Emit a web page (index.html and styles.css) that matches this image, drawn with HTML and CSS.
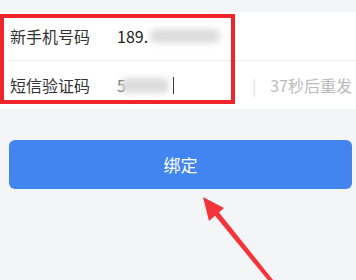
FILE: index.html
```html
<!DOCTYPE html>
<html lang="zh-CN">
  <head>
    <meta charset="UTF-8" />
    <meta name="viewport" content="width=device-width, initial-scale=1.0" />
    <title>绑定手机</title>
    <link rel="stylesheet" href="styles.css">
  </head>
  <body>
    <div class="form">
      <div class="row">
        <span class="label">新手机号码</span>
        <span class="value">189.</span>
        <span class="blur blur-phone"></span>
      </div>
      <div class="row">
        <span class="label">短信验证码</span>
        <div class="code">
          <span class="value faded">5</span>
          <span class="blur blur-code"></span>
          <span class="cursor"></span>
        </div>
        <span class="sep">|</span>
        <span class="resend">37秒后重发</span>
      </div>
    </div>
    <button class="bind">绑定</button>

    <!-- annotation overlay -->
    <div class="mark"></div>
    <svg class="arrow" width="356" height="280" viewBox="0 0 356 280">
      <polygon fill="#f5333a" points="203,197 224,208 219,212.5 273.6,280.7 270.5,283.3 215,215.7 209,221"/>
    </svg>
  </body>
</html>
```

FILE: styles.css
```css
html, body {
  margin: 0;
  padding: 0;
}
body {
  width: 356px;
  height: 280px;
  overflow: hidden;
  position: relative;
  background: #f4f5f7;
  font-family: "Noto Sans CJK SC", "Noto Sans", sans-serif;
  color: #333;
}
.form {
  margin-top: 12px;
  background: #fff;
  padding-left: 8px;
}
.row {
  height: 48px;
  display: flex;
  align-items: center;
  padding-left: 2px;
  font-size: 16px;
}
.row + .row {
  border-top: 1px solid #ececec;
}
.label {
  width: 107px;
  flex: none;
}
.value {
  color: #222;
}
.faded {
  color: #666;
}
.blur {
  display: inline-block;
  background: #dcdcdc;
  filter: blur(3px);
  border-radius: 6px;
}
.blur-phone {
  width: 70px;
  height: 14px;
  margin-left: 2px;
}
.code {
  flex: 1;
  display: flex;
  align-items: center;
}
.blur-code {
  width: 48px;
  height: 15px;
  margin-left: -5px;
}
.cursor {
  width: 1px;
  height: 17px;
  background: #333;
  margin-left: 4px;
}
.sep {
  color: #ddd;
  margin-right: 14px;
}
.resend {
  color: #bbb;
  padding-right: 4px;
}
.bind {
  display: block;
  margin: 31px 4px 0 9px;
  width: 343px;
  height: 49px;
  border: none;
  border-radius: 6px;
  background: #4285f0;
  color: #fff;
  font-family: inherit;
  font-size: 17px;
}
.mark {
  position: absolute;
  left: 0;
  top: 14px;
  width: 235px;
  height: 90px;
  box-sizing: border-box;
  border: 4px solid #f0262c;
}
.arrow {
  position: absolute;
  left: 0;
  top: 0;
}
```
